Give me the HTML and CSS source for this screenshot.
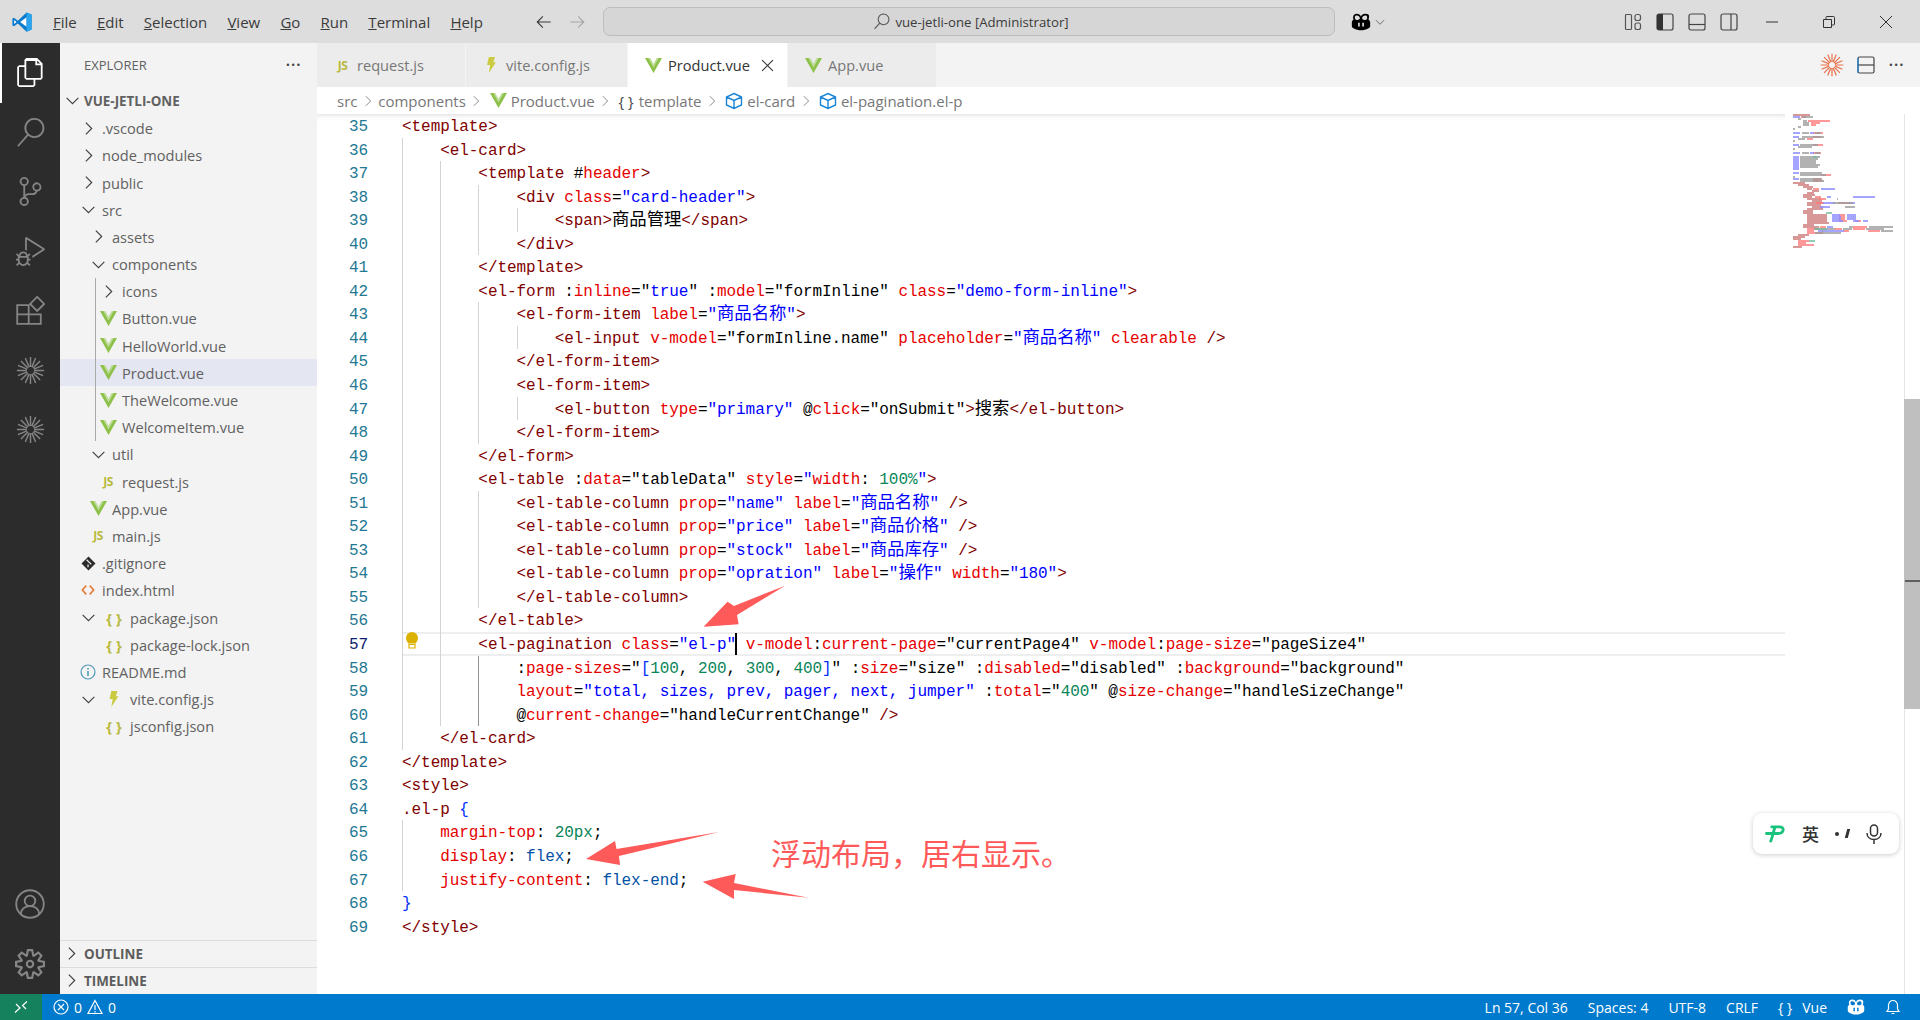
FILE: index.html
```html
<!DOCTYPE html>
<html lang="en">
<head>
    <meta charset="UTF-8">
    <title>Product.vue - vue-jetli-one</title>
    <link rel="stylesheet" href="styles.css">
</head>
<body>
    <svg class="sprites" width="0" height="0">
        <symbol id="i-chev-r" viewBox="0 0 16 16"><path d="M5.500 2.500 11 8l-5.500 5.500" fill="none" stroke="currentColor" stroke-width="1.100"/></symbol>
        <symbol id="i-chev-d" viewBox="0 0 16 16"><path d="M2.500 5.500 8 11l5.500-5.500" fill="none" stroke="currentColor" stroke-width="1.100"/></symbol>
        <symbol id="i-vue" viewBox="0 0 18 18"><path d="M0 1h5.500L9 7.500 12.500 1H18L9 17z" fill="#8dc149"/><path d="M3.500 1 9 11l5.500-10h-2L9 7.500 5.500 1z" fill="#fff" fill-opacity=".45"/></symbol>
        <symbol id="i-bolt" viewBox="0 0 12 18"><path d="M3 0h7L8 6h3L3 18l1.500-9H1z" fill="#cbcb41"/></symbol>
        <symbol id="i-box" viewBox="0 0 18 18"><path d="M9 1.500 16.500 5v8L9 16.500 1.500 13V5zM1.500 5 9 8.500 16.500 5M9 8.500v8" fill="none" stroke="#1a85d6" stroke-width="1.400"/></symbol>
        <symbol id="i-star" viewBox="0 0 32 32"><path d="M20 16h11M19.700 17.500l10.200 4.200M18.800 18.800l7.800 7.800M17.500 19.700l4.200 10.200M16 20v11M14.500 19.700l-4.200 10.200M13.200 18.800l-7.800 7.800M12.300 17.500 2.100 21.700M12 16H1M12.300 14.500 2.100 10.300M13.200 13.200 5.400 5.400M14.500 12.300 10.300 2.100M16 12V1M17.500 12.300l4.200-10.200M18.800 13.200l7.800-7.800M19.700 14.500l10.200-4.200" fill="none" stroke="currentColor" stroke-width="1.600"/></symbol>
        <symbol id="i-copilot" viewBox="0 0 24 24"><path fill-rule="evenodd" d="M12 5.500C11 3 9.500 2 7 2 4 2 2.500 3.800 2.500 6.500c0 1 .2 2 .6 2.600C2 10 1 11 1 12.500V17c0 1 1 2 2 2.500 3 1.700 6 2.500 9 2.500s6-.8 9-2.500c1-.5 2-1.500 2-2.500v-4.500c0-1.500-1-2.500-2.100-3.400.4-.6.6-1.600.6-2.600C22.500 3.800 21 2 17 2c-2.500 0-4 1-5 3.500zM7 4.300c-1.700 0-2.400.8-2.400 2.200S5.400 9.600 7 9.600s3.700-.6 3.700-2.100S8.700 4.300 7 4.300zm10 0c1.700 0 2.400.8 2.400 2.200s-.8 3.100-2.400 3.100-3.700-.6-3.700-2.100 1.900-3.200 3.700-3.200zM8.500 13v4.500h2V13zm5 0v4.500h2V13z"/></symbol>
    </svg>

    <header class="titlebar">
        <svg class="vs-logo" viewBox="0 0 24 24" width="22" height="22"><path d="M17 1.500 7.500 10.500 3.300 7.300 1.500 8.300v7.400l1.800 1 4.200-3.200L17 22.500l5.500-2.300V3.800z" fill="#0a7bcc"/><path d="M17 6.800 10 12l7 5.200z" fill="#fff"/><path d="M17 1.500l5.500 2.300v16.400L17 22.500z" fill="#2ba4ee"/><path d="M3.500 9.700 6 12l-2.500 2.300z" fill="#fff"/></svg>
        <nav class="menu">
            <span><u>F</u>ile</span>
            <span><u>E</u>dit</span>
            <span><u>S</u>election</span>
            <span><u>V</u>iew</span>
            <span><u>G</u>o</span>
            <span><u>R</u>un</span>
            <span><u>T</u>erminal</span>
            <span><u>H</u>elp</span>
        </nav>
        <div class="nav-arrows">
            <svg viewBox="0 0 16 16" width="18" height="18"><path d="M14 8H2.500M7 3 2 8l5 5" fill="none" stroke="#3b3b3b" stroke-width="1"/></svg>
            <svg class="off" viewBox="0 0 16 16" width="18" height="18"><path d="M2 8h11.500M9 3l5 5-5 5" fill="none" stroke="#a6a6a6" stroke-width="1"/></svg>
        </div>
        <div class="command-center">
            <svg viewBox="0 0 16 16" width="17" height="17"><path d="M10 1a5 5 0 1 1-3.600 8.500L1.500 15M10 1a5 5 0 0 0-3.600 8.500" fill="none" stroke="#555" stroke-width="1"/></svg>
            <span>vue-jetli-one [Administrator]</span>
        </div>
        <div class="copilot-menu">
            <svg width="20" height="20"><use href="#i-copilot"/></svg>
            <svg class="tiny-chev" width="12" height="12"><use href="#i-chev-d"/></svg>
        </div>
        <div class="layout-btns">
            <svg viewBox="0 0 18 18" width="18" height="18"><g fill="none" stroke="#555" stroke-width="1.200"><rect x="1.500" y="1.500" width="6" height="15" rx="1"/><rect x="11" y="1.500" width="5.500" height="6" rx="2"/><rect x="11" y="10" width="5.500" height="6.500" rx="2"/></g></svg>
            <svg viewBox="0 0 18 18" width="18" height="18"><rect x="1" y="1" width="16" height="16" rx="2" fill="none" stroke="#444" stroke-width="1.200"/><path d="M1 3a2 2 0 0 1 2-2h4v16H3a2 2 0 0 1-2-2z" fill="#333"/></svg>
            <svg viewBox="0 0 18 18" width="18" height="18"><rect x="1" y="1" width="16" height="16" rx="2" fill="none" stroke="#444" stroke-width="1.200"/><path d="M1 11.500h16" stroke="#444" stroke-width="1.200"/></svg>
            <svg viewBox="0 0 18 18" width="18" height="18"><rect x="1" y="1" width="16" height="16" rx="2" fill="none" stroke="#444" stroke-width="1.200"/><path d="M11 1v16" stroke="#444" stroke-width="1.200"/></svg>
        </div>
        <div class="window-btns">
            <svg viewBox="0 0 12 12" width="12" height="12"><path d="M0 6h12" stroke="#333" stroke-width="1"/></svg>
            <svg viewBox="0 0 12 12" width="12" height="12"><path d="M.5 3.500h8v8h-8zM3 3.500V1.500A1 1 0 0 1 4 .5h6.500a1 1 0 0 1 1 1V8a1 1 0 0 1-1 1h-2" fill="none" stroke="#333" stroke-width="1"/></svg>
            <svg viewBox="0 0 12 12" width="12" height="12"><path d="M0 0l12 12M12 0 0 12" stroke="#333" stroke-width="1"/></svg>
        </div>
    </header>

    <main class="workbench">
        <aside class="activitybar">
            <div class="act active"><svg viewBox="0 0 24 24" width="29" height="29"><path fill="#fff" d="M17.500 0h-9L7 1.500V6H2.500L1 7.500v15.070L2.500 24h12.070L16 22.570V18h4.700l1.300-1.430V4.500L17.500 0zm0 2.120l2.380 2.380H17.500V2.120zm-3 20.380h-12v-15H7v9.070L8.500 18h6v4.500zm6-6h-12v-14H16V6h4.500v10.500z"/></svg></div>
            <div class="act"><svg viewBox="0 0 24 24" width="29" height="29"><path d="M15.250 0a8.250 8.250 0 0 0-6.180 13.720L1 22.880l1.120 1 8.050-9.120A8.251 8.251 0 1 0 15.250.01V0zm0 15a6.750 6.750 0 1 1 0-13.500 6.750 6.750 0 0 1 0 13.500z"/></svg></div>
            <div class="act"><svg viewBox="0 0 24 24" width="29" height="29"><path d="M21.007 8.222A3.738 3.738 0 0 0 15.045 5.200a3.737 3.737 0 0 0 1.156 6.583 2.988 2.988 0 0 1-2.668 1.670h-2.990a4.456 4.456 0 0 0-2.989 1.165V7.400a3.737 3.737 0 1 0-1.494 0v9.117a3.776 3.776 0 1 0 1.816.099 2.990 2.990 0 0 1 2.668-1.667h2.990a4.484 4.484 0 0 0 4.223-3.039 3.736 3.736 0 0 0 3.250-3.687zM4.565 3.738a2.242 2.242 0 1 1 4.484 0 2.242 2.242 0 0 1-4.484 0zm4.484 16.441a2.242 2.242 0 1 1-4.484 0 2.242 2.242 0 0 1 4.484 0zm8.221-9.715a2.242 2.242 0 1 1 0-4.485 2.242 2.242 0 0 1 0 4.485z"/></svg></div>
            <div class="act"><svg viewBox="0 0 24 24" width="29" height="29"><path d="M10.940 13.500l-1.320 1.320a3.730 3.730 0 0 0-7.240 0L1.060 13.500 0 14.560l1.720 1.720-.22.220V18H0v1.500h1.500v.08c.077.489.214.966.41 1.420L0 22.940 1.060 24l1.650-1.650A4.308 4.308 0 0 0 6 24a4.310 4.310 0 0 0 3.290-1.650L10.940 24 12 22.940 10.090 21c.198-.464.336-.951.41-1.450v-.1H12V18h-1.500v-1.500l-.22-.22L12 14.560l-1.060-1.060zM6 13.500a2.250 2.250 0 0 1 2.250 2.250h-4.500A2.250 2.250 0 0 1 6 13.500zm3 6a3.330 3.330 0 0 1-3 3 3.330 3.330 0 0 1-3-3v-2.250h6v2.250zm14.760-9.900v1.260L13.500 17.370v-1.800l8.460-5.370L9 2v9.460a5.070 5.070 0 0 0-1.500-.72V.63L8.640 0l15.120 9.600z"/></svg></div>
            <div class="act"><svg viewBox="0 0 24 24" width="29" height="29"><path d="M1 7.500h9.500V23H1zM1 15.200h19.500V23h-10M10.500 7.500v15.500M17.500.8l5.800 5.800-5.800 5.800-5.800-5.800z" fill="none" stroke="#858585" stroke-width="1.500"/></svg></div>
            <div class="act"><svg width="29" height="29"><use href="#i-star"/></svg></div>
            <div class="act"><svg width="29" height="29"><use href="#i-star"/></svg></div>
            <div class="act-spacer"></div>
            <div class="act"><svg viewBox="0 0 24 24" width="30" height="30"><g fill="none" stroke="#858585" stroke-width="1.500"><circle cx="12" cy="12" r="11"/><circle cx="12" cy="9.500" r="4.200"/><path d="M4.500 20c.6-4 3.500-6.300 7.500-6.300s6.900 2.300 7.500 6.300"/></g></svg></div>
            <div class="act act-last"><svg viewBox="0 0 24 24" width="30" height="30"><path d="M19.850 8.750l4.150.83v4.840l-4.150.83 2.350 3.520-3.430 3.430-3.520-2.350-.83 4.150H9.580l-.83-4.150-3.520 2.350-3.430-3.430 2.350-3.520L0 14.420V9.580l4.150-.83L1.800 5.230 5.230 1.800l3.520 2.350L9.580 0h4.840l.83 4.150 3.520-2.350 3.430 3.430-2.350 3.520zm-1.570 5.070l4-.81v-2l-4-.81-.54-1.300 2.290-3.430-1.430-1.430-3.430 2.290-1.300-.54-.81-4h-2l-.81 4-1.300.54-3.430-2.290-1.430 1.430L6.380 8.900l-.54 1.300-4 .81v2l4 .81.54 1.300-2.290 3.430 1.430 1.430 3.430-2.290 1.300.54.81 4h2l.81-4 1.300-.54 3.430 2.290 1.430-1.430-2.290-3.430.54-1.300zm-8.186-4.672A3.430 3.430 0 0 1 12 8.570 3.440 3.440 0 0 1 15.430 12a3.430 3.430 0 1 1-5.336-2.852zm.956 4.274c.281.188.612.288.95.288A1.700 1.700 0 0 0 13.710 12a1.710 1.710 0 1 0-2.660 1.422z"/></svg></div>
        </aside>

        <aside class="sidebar">
            <div class="side-head"><span>EXPLORER</span><span class="dots">···</span></div>
            <div class="tree">
                <div class="row root"><span class="slot"><svg width="17" height="17"><use href="#i-chev-d"/></svg></span>VUE-JETLI-ONE</div>
                <div class="row d1"><span class="slot"><svg width="17" height="17"><use href="#i-chev-r"/></svg></span>.vscode</div>
                <div class="row d1"><span class="slot"><svg width="17" height="17"><use href="#i-chev-r"/></svg></span>node_modules</div>
                <div class="row d1"><span class="slot"><svg width="17" height="17"><use href="#i-chev-r"/></svg></span>public</div>
                <div class="row d1"><span class="slot"><svg width="17" height="17"><use href="#i-chev-d"/></svg></span>src</div>
                <div class="row d2"><span class="slot"><svg width="17" height="17"><use href="#i-chev-r"/></svg></span>assets</div>
                <div class="row d2"><span class="slot"><svg width="17" height="17"><use href="#i-chev-d"/></svg></span>components</div>
                <div class="guided">
                    <div class="row d3"><span class="slot"><svg width="17" height="17"><use href="#i-chev-r"/></svg></span>icons</div>
                    <div class="row d3"><span class="slot"><svg width="17" height="17"><use href="#i-vue"/></svg></span>Button.vue</div>
                    <div class="row d3"><span class="slot"><svg width="17" height="17"><use href="#i-vue"/></svg></span>HelloWorld.vue</div>
                    <div class="row d3 selected"><span class="slot"><svg width="17" height="17"><use href="#i-vue"/></svg></span>Product.vue</div>
                    <div class="row d3"><span class="slot"><svg width="17" height="17"><use href="#i-vue"/></svg></span>TheWelcome.vue</div>
                    <div class="row d3"><span class="slot"><svg width="17" height="17"><use href="#i-vue"/></svg></span>WelcomeItem.vue</div>
                </div>
                <div class="row d2"><span class="slot"><svg width="17" height="17"><use href="#i-chev-d"/></svg></span>util</div>
                <div class="row d3"><span class="slot js">JS</span>request.js</div>
                <div class="row d2"><span class="slot"><svg width="17" height="17"><use href="#i-vue"/></svg></span>App.vue</div>
                <div class="row d2"><span class="slot js">JS</span>main.js</div>
                <div class="row d1"><span class="slot"><svg viewBox="0 0 16 16" width="15" height="15"><path d="M8 .5 15.500 8 8 15.500.5 8z" fill="#2b2b2b"/><path d="M6 4l5 5M7.500 9v3" stroke="#f3f3f3" stroke-width="1.300"/></svg></span>.gitignore</div>
                <div class="row d1"><span class="slot"><svg viewBox="0 0 16 16" width="14" height="14"><path d="M6 3 1.500 8 6 13M10 3l4.500 5L10 13" fill="none" stroke="#e37933" stroke-width="1.800"/></svg></span>index.html</div>
                <div class="row d1"><span class="slot"><svg width="17" height="17"><use href="#i-chev-d"/></svg></span><span class="nest json">{ }</span>package.json</div>
                <div class="row d1"><span class="slot"></span><span class="nest json">{ }</span>package-lock.json</div>
                <div class="row d1"><span class="slot"><svg viewBox="0 0 16 16" width="16" height="16"><circle cx="8" cy="8" r="7" fill="none" stroke="#519aba" stroke-width="1.200"/><path d="M8 4v1.600M8 7v5" stroke="#519aba" stroke-width="1.600"/></svg></span>README.md</div>
                <div class="row d1"><span class="slot"><svg width="17" height="17"><use href="#i-chev-d"/></svg></span><span class="nest"><svg width="12" height="16"><use href="#i-bolt"/></svg></span>vite.config.js</div>
                <div class="row d1"><span class="slot"></span><span class="nest json">{ }</span>jsconfig.json</div>
            </div>
            <div class="panel-head"><svg width="17" height="17"><use href="#i-chev-r"/></svg>OUTLINE</div>
            <div class="panel-head"><svg width="17" height="17"><use href="#i-chev-r"/></svg>TIMELINE</div>
        </aside>

        <section class="editor">
            <div class="tabs">
                <div class="tab"><span class="tab-icon js">JS</span>request.js</div>
                <div class="tab tab-vite"><span class="tab-icon"><svg width="11" height="16"><use href="#i-bolt"/></svg></span>vite.config.js</div>
                <div class="tab tab-active"><span class="tab-icon"><svg width="17" height="17"><use href="#i-vue"/></svg></span>Product.vue<svg class="tab-close" viewBox="0 0 12 12" width="13" height="13"><path d="M1 1l10 10M11 1 1 11" stroke="#333" stroke-width="1"/></svg></div>
                <div class="tab"><span class="tab-icon"><svg width="17" height="17"><use href="#i-vue"/></svg></span>App.vue</div>
                <div class="tab-actions">
                    <svg class="orange" width="24" height="24"><use href="#i-star"/></svg>
                    <svg viewBox="0 0 18 18" width="18" height="20"><rect x="1" y="1" width="16" height="16" rx="1.500" fill="none" stroke="#444" stroke-width="1.200"/><path d="M1 9h16" stroke="#444" stroke-width="1.200"/><path d="M1 2v15" stroke="#1a85d6" stroke-width="1.200"/></svg>
                    <span class="dots">···</span>
                </div>
            </div>
            <div class="breadcrumbs">
                <span>src</span><svg class="sep" width="14" height="14"><use href="#i-chev-r"/></svg>
                <span>components</span><svg class="sep" width="14" height="14"><use href="#i-chev-r"/></svg>
                <svg class="crumb-icon" width="17" height="17"><use href="#i-vue"/></svg><span>Product.vue</span><svg class="sep" width="14" height="14"><use href="#i-chev-r"/></svg>
                <span class="crumb-braces">{ }</span><span>template</span><svg class="sep" width="14" height="14"><use href="#i-chev-r"/></svg>
                <svg class="crumb-icon" width="18" height="18"><use href="#i-box"/></svg><span>el-card</span><svg class="sep" width="14" height="14"><use href="#i-chev-r"/></svg>
                <svg class="crumb-icon" width="18" height="18"><use href="#i-box"/></svg><span>el-pagination.el-p</span>
            </div>
            <div class="editor-body">
                <div class="lines">
                    <div class="gutter">
                        <div>35</div><div>36</div><div>37</div><div>38</div><div>39</div><div>40</div><div>41</div><div>42</div><div>43</div><div>44</div><div>45</div><div>46</div><div>47</div><div>48</div><div>49</div><div>50</div><div>51</div><div>52</div><div>53</div><div>54</div><div>55</div><div>56</div><div class="now">57</div><div>58</div><div>59</div><div>60</div><div>61</div><div>62</div><div>63</div><div>64</div><div>65</div><div>66</div><div>67</div><div>68</div><div>69</div>
                    </div>
                    <div class="code">
<div class="ln"><span class="t">&lt;template&gt;</span></div>
<div class="ln"><i></i><span class="t">&lt;el-card&gt;</span></div>
<div class="ln"><i></i><i></i><span class="t">&lt;template</span> #<span class="a">header</span><span class="t">&gt;</span></div>
<div class="ln"><i></i><i></i><i></i><span class="t">&lt;div</span> <span class="a">class</span>=<span class="s">"card-header"</span><span class="t">&gt;</span></div>
<div class="ln"><i></i><i></i><i></i><i></i><span class="t">&lt;span&gt;</span><span class="c">商品管理</span><span class="t">&lt;/span&gt;</span></div>
<div class="ln"><i></i><i></i><i></i><span class="t">&lt;/div&gt;</span></div>
<div class="ln"><i></i><i></i><span class="t">&lt;/template&gt;</span></div>
<div class="ln"><i></i><i></i><span class="t">&lt;el-form</span> :<span class="a">inline</span>="<span class="s">true</span>" :<span class="a">model</span>="formInline" <span class="a">class</span>=<span class="s">"demo-form-inline"</span><span class="t">&gt;</span></div>
<div class="ln"><i></i><i></i><i></i><span class="t">&lt;el-form-item</span> <span class="a">label</span>=<span class="s">"<span class="c">商品名称</span>"</span><span class="t">&gt;</span></div>
<div class="ln"><i></i><i></i><i></i><i></i><span class="t">&lt;el-input</span> <span class="a">v-model</span>="formInline.name" <span class="a">placeholder</span>=<span class="s">"<span class="c">商品名称</span>"</span> <span class="a">clearable</span> <span class="t">/&gt;</span></div>
<div class="ln"><i></i><i></i><i></i><span class="t">&lt;/el-form-item&gt;</span></div>
<div class="ln"><i></i><i></i><i></i><span class="t">&lt;el-form-item&gt;</span></div>
<div class="ln"><i></i><i></i><i></i><i></i><span class="t">&lt;el-button</span> <span class="a">type</span>=<span class="s">"primary"</span> @<span class="a">click</span>="onSubmit"<span class="t">&gt;</span><span class="c">搜索</span><span class="t">&lt;/el-button&gt;</span></div>
<div class="ln"><i></i><i></i><i></i><span class="t">&lt;/el-form-item&gt;</span></div>
<div class="ln"><i></i><i></i><span class="t">&lt;/el-form&gt;</span></div>
<div class="ln"><i></i><i></i><span class="t">&lt;el-table</span> :<span class="a">data</span>="tableData" <span class="a">style</span>=<span class="s">"</span><span class="a">width</span>: <span class="n">100%</span><span class="s">"</span><span class="t">&gt;</span></div>
<div class="ln"><i></i><i></i><i></i><span class="t">&lt;el-table-column</span> <span class="a">prop</span>=<span class="s">"name"</span> <span class="a">label</span>=<span class="s">"<span class="c">商品名称</span>"</span> <span class="t">/&gt;</span></div>
<div class="ln"><i></i><i></i><i></i><span class="t">&lt;el-table-column</span> <span class="a">prop</span>=<span class="s">"price"</span> <span class="a">label</span>=<span class="s">"<span class="c">商品价格</span>"</span> <span class="t">/&gt;</span></div>
<div class="ln"><i></i><i></i><i></i><span class="t">&lt;el-table-column</span> <span class="a">prop</span>=<span class="s">"stock"</span> <span class="a">label</span>=<span class="s">"<span class="c">商品库存</span>"</span> <span class="t">/&gt;</span></div>
<div class="ln"><i></i><i></i><i></i><span class="t">&lt;el-table-column</span> <span class="a">prop</span>=<span class="s">"opration"</span> <span class="a">label</span>=<span class="s">"<span class="c">操作</span>"</span> <span class="a">width</span>=<span class="s">"180"</span><span class="t">&gt;</span></div>
<div class="ln"><i></i><i></i><i></i><span class="t">&lt;/el-table-column&gt;</span></div>
<div class="ln"><i></i><i></i><span class="t">&lt;/el-table&gt;</span></div>
<div class="ln current"><svg class="bulb" viewBox="0 0 12 17" width="12" height="17"><path d="M6 0a6 6 0 0 1 6 6c0 2.500-1.500 3.500-2.200 5.500H2.200C1.500 9.500 0 8.500 0 6a6 6 0 0 1 6-6z" fill="#ddb100"/><path d="M3 12.500h6V16H3z" fill="#fff" stroke="#ddb100" stroke-width="1.200"/></svg><i></i><i></i><span class="t">&lt;el-pagination</span> <span class="a">class</span>=<span class="s">"el-p"</span><b class="cursor"></b> <span class="a">v-model</span>:<span class="a">current-page</span>="currentPage4" <span class="a">v-model</span>:<span class="a">page-size</span>="pageSize4"</div>
<div class="ln"><i></i><i></i><i class="on"></i>:<span class="a">page-sizes</span>="<span class="b">[</span><span class="n">100</span>, <span class="n">200</span>, <span class="n">300</span>, <span class="n">400</span><span class="b">]</span>" :<span class="a">size</span>="size" :<span class="a">disabled</span>="disabled" :<span class="a">background</span>="background"</div>
<div class="ln"><i></i><i></i><i class="on"></i><span class="a">layout</span>=<span class="s">"total, sizes, prev, pager, next, jumper"</span> :<span class="a">total</span>="<span class="n">400</span>" @<span class="a">size-change</span>="handleSizeChange"</div>
<div class="ln"><i></i><i></i><i class="on"></i>@<span class="a">current-change</span>="handleCurrentChange" <span class="t">/&gt;</span></div>
<div class="ln"><i></i><span class="t">&lt;/el-card&gt;</span></div>
<div class="ln"><span class="t">&lt;/template&gt;</span></div>
<div class="ln"><span class="t">&lt;style&gt;</span></div>
<div class="ln"><span class="t">.el-p</span> <span class="b">{</span></div>
<div class="ln"><i></i><span class="a">margin-top</span>: <span class="n">20px</span>;</div>
<div class="ln"><i></i><span class="a">display</span>: <span class="v">flex</span>;</div>
<div class="ln"><i></i><span class="a">justify-content</span>: <span class="v">flex-end</span>;</div>
<div class="ln"><span class="b">}</span></div>
<div class="ln"><span class="t">&lt;/style&gt;</span></div>
                    </div>
                </div>
                <div class="minimap">
                    <svg width="105" height="142" viewBox="0 0 105 142" fill="none" stroke-width="1.600">
                        <path stroke="#c77" d="M0 1h17M0 69h12M5 71h11M10 73h10M14 75h5M19 77h7M14 79h7M10 81h12M10 83h9M14 85h14M19 87h10M14 89h16M14 91h14M19 93h11M14 95h16M10 97h10M10 99h10M14 101h20M14 103h20M14 105h20M14 107h20M14 109h22M10 111h11M10 113h16M5 121h11M0 123h12M0 125h8M0 133h9"/>
                        <path stroke="#f77" d="M8 3h5M15 7h22M18 9h9M18 11h5M20 19h10M20 23h8M14 25h6M20 31h10M20 39h8M28 61h10M20 65h8M20 67h10M20 75h6M22 83h6M26 85h7M23 89h8M45 89h12M46 101h6M46 103h6M46 105h6M46 107h8M62 107h6M27 113h6M60 113h14M14 115h12M42 115h7M60 115h12M14 117h7M50 117h6M75 117h12M14 119h16M5 127h11M5 129h8M5 131h16"/>
                        <path stroke="#88f" d="M0 3h7M0 19h7M17 19h4M0 23h6M0 31h6M0 39h7M17 39h4M0 43h6M0 45h6M0 47h6M0 49h6M0 51h6M0 53h6M0 55h6M0 59h6M0 65h6M28 75h14M34 83h4M60 83h22M30 89h12M56 89h6M27 93h10M39 101h8M54 101h9M39 103h9M54 103h9M39 105h9M54 105h9M39 107h11M60 107h6M70 107h5M34 113h6M25 117h26"/>
                        <path stroke="#999" d="M9 3h11M5 5h3M10 7h4M10 9h6M10 11h6M5 13h3M0 15h2M9 19h7M22 19h6M9 23h22M5 25h7M0 27h2M7 31h18M5 33h14M0 35h2M9 39h7M22 39h5M7 43h20M7 45h18M7 47h16M7 49h16M7 51h20M7 53h18M7 59h22M7 61h26M0 63h2M7 65h22M7 67h24M44 85h1M40 89h20M52 93h10M56 113h4M76 113h24M21 115h21M50 115h9M73 115h18M29 117h1M88 117h12M22 119h26"/>
                        <path stroke="#7b9" d="M22 115h12M20 43h4M16 127h6M33 99h6"/>
                    </svg>
                </div>
                <div class="scroll-track"><div class="scroll-thumb"><div class="scroll-mark"></div></div></div>
            </div>
        </section>
    </main>

    <footer class="statusbar">
        <div class="remote"><svg viewBox="0 0 16 16" width="16" height="16"><path d="M2 13.500 7 9 3 5M14 2.500 9.500 6.500 13 10" fill="none" stroke="#fff" stroke-width="1.200"/></svg></div>
        <div class="problems">
            <svg viewBox="0 0 16 16" width="16" height="16"><circle cx="8" cy="8" r="7" fill="none" stroke="#fff" stroke-width="1.200"/><path d="M5 5l6 6M11 5l-6 6" stroke="#fff" stroke-width="1.200"/></svg><span>0</span>
            <svg class="warn" viewBox="0 0 16 16" width="16" height="16"><path d="M8 1.500 15 14.500H1zM8 6v5M8 12v1.500" fill="none" stroke="#fff" stroke-width="1.200"/></svg><span>0</span>
        </div>
        <div class="status-right">
            <span>Ln 57, Col 36</span>
            <span>Spaces: 4</span>
            <span>UTF-8</span>
            <span>CRLF</span>
            <span class="lang"><span>{ }</span><span>Vue</span></span>
            <svg class="status-copilot" width="18" height="18"><use href="#i-copilot"/></svg>
            <svg viewBox="0 0 16 16" width="16" height="16"><path d="M8 1.500a4.500 4.500 0 0 1 4.500 4.500v4l1.500 2.500H2L3.500 10V6A4.500 4.500 0 0 1 8 1.500zM6.500 14.500h3" fill="none" stroke="#fff" stroke-width="1.200"/></svg>
        </div>
    </footer>

    <!-- screenshot annotations on top of the editor -->
    <svg class="arrows" width="1920" height="1020" viewBox="0 0 1920 1020">
        <path d="M703.600 626.700 727.500 601.700 734 606 785 585.700 737 615 738.600 624.300z"/>
        <path d="M586 859 615 841 616.500 849 719 832 619 856 620 865z"/>
        <path d="M702.700 881.700 735.700 874 734 883 808.500 897.700 734 890 734 899z"/>
    </svg>
    <div class="note">浮动布局，居右显示。</div>

    <div class="ime">
        <svg viewBox="0 0 22 20" width="21" height="19"><path d="M6 18c1.500-4 3-10 4.500-15M7 3h8c3 0 4.500 1.500 4 3.500-.5 2.500-3 3.500-6 3.500H1.500" fill="none" stroke="#19c37d" stroke-width="3" stroke-linecap="round"/></svg>
        <span class="ime-lang">英</span>
        <span class="ime-punct"><b></b><em></em></span>
        <svg viewBox="0 0 18 20" width="18" height="20"><rect x="5.500" y="1" width="7" height="11" rx="3.500" fill="none" stroke="#333" stroke-width="1.500"/><path d="M2 9c0 4 3 6.500 7 6.500s7-2.500 7-6.500M9 15.500V20" fill="none" stroke="#333" stroke-width="1.500"/></svg>
    </div>
</body>
</html>
```

FILE: styles.css
```css
* {
    box-sizing: border-box;
}

body {
    margin: 0;
    width: 1920px;
    height: 1020px;
    overflow: hidden;
    position: relative;
    display: flex;
    flex-direction: column;
    font-family: "Open Sans", "Noto Sans", sans-serif;
    font-size: 14.6px;
    color: #616161;
    background-color: #fff;
}

.sprites {
    position: absolute;
}

/* title bar */
.titlebar {
    height: 43px;
    flex-shrink: 0;
    display: flex;
    align-items: center;
    background-color: #dddddd;
    color: #3b3b3b;
}

.vs-logo {
    margin-left: 11px;
}

.menu {
    display: flex;
    margin-left: 10px;
    width: 492px;
    gap: 20.200px;
    padding-left: 10px;
    font-size: 15px;
}

.nav-arrows {
    display: flex;
    gap: 15px;
}

.command-center {
    margin-left: 17px;
    width: 732px;
    height: 29px;
    display: flex;
    align-items: center;
    justify-content: center;
    gap: 5px;
    background-color: #d6d6d6;
    border: 1px solid #bdbdbd;
    border-radius: 7px;
    font-size: 13.200px;
    padding-left: 4px;
}

.copilot-menu {
    margin-left: 16px;
    display: flex;
    align-items: center;
    gap: 3px;
    color: #222;
}

.tiny-chev {
    color: #555;
}

.layout-btns {
    margin-left: 238px;
    display: flex;
    gap: 14px;
}

.window-btns {
    margin-left: 28px;
    display: flex;
    gap: 45px;
}

/* main area */
.workbench {
    flex: 1;
    display: flex;
    min-height: 0;
}

.activitybar {
    width: 60px;
    flex-shrink: 0;
    display: flex;
    flex-direction: column;
    background-color: #2c2c2c;
    color: #858585;
}

.act {
    height: 59.500px;
    flex-shrink: 0;
    display: flex;
    align-items: center;
    justify-content: center;
    fill: #858585;
}

.act.active {
    border-left: 2px solid #fff;
    padding-right: 2px;
}

.act-spacer {
    flex: 1;
}

.act-last {
    height: 60px;
}

.sidebar {
    width: 257px;
    flex-shrink: 0;
    display: flex;
    flex-direction: column;
    background-color: #f3f3f3;
}

.side-head {
    height: 44.400px;
    flex-shrink: 0;
    display: flex;
    align-items: center;
    justify-content: space-between;
    padding: 0 16px 0 24px;
    font-size: 13px;
}

.dots {
    font-size: 20px;
    font-weight: 400;
    line-height: 1;
    color: #424242;
}

.tree {
    flex: 1;
}

.row {
    height: 27.200px;
    display: flex;
    align-items: center;
    white-space: nowrap;
    color: #616161;
}

.root {
    padding-left: 5px;
    font-weight: 700;
    font-size: 13.400px;
}

.root .slot {
    margin-right: 5px;
}

.d1 {
    padding-left: 21px;
}

.d2 {
    padding-left: 31px;
}

.d3 {
    padding-left: 41px;
}

.slot {
    width: 14px;
    flex-shrink: 0;
    margin-right: 7px;
    display: flex;
    justify-content: center;
    color: #424242;
}

.slot svg {
    flex-shrink: 0;
}

.js {
    font-size: 12px;
    font-weight: 700;
    color: #b9b93d;
    letter-spacing: -0.500px;
}

.nest {
    width: 14px;
    margin: 0 9px 0 5px;
    display: flex;
    justify-content: center;
    flex-shrink: 0;
}

.json {
    color: #b9b93d;
    font-weight: 700;
    white-space: nowrap;
}

.selected {
    background-color: #e4e6f1;
}

.guided {
    position: relative;
}

.guided::before {
    content: "";
    position: absolute;
    left: 35px;
    top: 0;
    bottom: 0;
    width: 1px;
    background-color: #a9a9a9;
}

.panel-head {
    height: 27.200px;
    flex-shrink: 0;
    display: flex;
    align-items: center;
    gap: 4px;
    padding-left: 3px;
    border-top: 1.500px solid #dcdcdc;
    font-size: 13.400px;
    font-weight: 700;
    color: #5c5c5c;
}

.panel-head svg {
    color: #424242;
}

/* editor */
.editor {
    flex: 1;
    min-width: 0;
    display: flex;
    flex-direction: column;
}

.tabs {
    height: 44px;
    flex-shrink: 0;
    display: flex;
    background-color: #f3f3f3;
}

.tab {
    width: 149px;
    flex-shrink: 0;
    display: flex;
    align-items: center;
    padding-left: 17px;
    background-color: #ececec;
    border-right: 1px solid #f3f3f3;
    color: #777;
}

.tab-vite {
    width: 162px;
}

.tab-active {
    width: 160px;
    background-color: #fff;
    color: #333;
}

.tab-icon {
    width: 17px;
    margin-right: 6px;
    display: flex;
    justify-content: center;
    flex-shrink: 0;
}

.tab-close {
    margin-left: 11px;
}

.tab-actions {
    margin-left: auto;
    display: flex;
    align-items: center;
    gap: 13px;
    padding-right: 16px;
}

.orange {
    color: #e8714a;
}

.breadcrumbs {
    height: 27px;
    flex-shrink: 0;
    display: flex;
    align-items: center;
    padding-left: 20px;
    font-size: 15px;
    color: #777;
}

.sep {
    margin: 0 3.400px;
    color: #888;
}

.crumb-icon {
    margin: 0 4px 0 3px;
}

.crumb-braces {
    color: #444;
    margin: 0 5px 0 3px;
    white-space: nowrap;
}

.editor-body {
    flex: 1;
    min-height: 0;
    display: flex;
}

.lines {
    flex: 1;
    min-width: 0;
    display: flex;
    box-shadow: inset 0 6px 6px -6px #cfcfcf;
    font-family: "Liberation Mono", monospace;
    font-size: 16px;
    letter-spacing: -0.056px;
    color: #000;
}

.gutter {
    width: 51px;
    margin-right: 34px;
    padding-top: 2px;
    flex-shrink: 0;
    text-align: right;
    color: #237893;
    line-height: 23.550px;
}

.gutter .now {
    color: #0b216f;
}

.code {
    flex: 1;
    min-width: 0;
}

.ln {
    height: 23.550px;
    padding-top: 2px;
    line-height: 23.550px;
    white-space: pre;
    position: relative;
}

.ln i {
    display: inline-block;
    width: 38.180px;
    height: 23.550px;
    margin-top: -2px;
    vertical-align: top;
    border-left: 1px solid #d3d3d3;
}

.ln i.on {
    border-left-color: #939393;
}

.current {
    box-shadow: inset 0 2px 0 #eeeeee, inset 0 -2px 0 #eeeeee;
}

.bulb {
    position: absolute;
    left: 4px;
    top: 0;
}

.cursor {
    display: inline-block;
    width: 2px;
    height: 22px;
    margin: -1px -1px 0;
    vertical-align: top;
    background-color: #000;
}

.t { color: #800000; }
.a { color: #e50000; }
.s { color: #0000ff; }
.b { color: #0431fa; }
.n { color: #098658; }
.v { color: #0451a5; }

.c {
    font-family: "Noto Sans CJK SC", sans-serif;
    font-size: 17.400px;
    line-height: 0;
}

.minimap {
    width: 119px;
    flex-shrink: 0;
    padding-left: 8px;
}

.scroll-track {
    width: 16px;
    flex-shrink: 0;
    position: relative;
    border-left: 1px solid #e5e5e5;
}

.scroll-thumb {
    position: absolute;
    top: 285px;
    left: -1px;
    right: 0;
    height: 310px;
    background-color: #bfbfbf;
}

.scroll-mark {
    position: absolute;
    top: 181px;
    left: 1px;
    right: 0;
    height: 2px;
    background-color: #5f5f5f;
}

/* status bar */
.statusbar {
    height: 26px;
    flex-shrink: 0;
    display: flex;
    align-items: center;
    background-color: #007acc;
    color: #fff;
    font-size: 14px;
}

.remote {
    width: 42px;
    height: 100%;
    display: flex;
    align-items: center;
    justify-content: center;
    background-color: #16825d;
}

.problems {
    display: flex;
    align-items: center;
    margin-left: 11px;
    gap: 5px;
}

.status-right {
    margin-left: auto;
    display: flex;
    align-items: center;
    gap: 20px;
    padding-right: 19px;
}

.lang {
    display: flex;
    gap: 10px;
}

.status-copilot {
    color: #fff;
    fill: #fff;
}

/* things lying over the editor */
.arrows {
    position: absolute;
    left: 0;
    top: 0;
    fill: #ff5a5a;
    pointer-events: none;
}

.note {
    position: absolute;
    left: 771px;
    top: 832px;
    font-family: "Noto Sans CJK SC", sans-serif;
    font-size: 30px;
    line-height: 40px;
    white-space: nowrap;
    color: #ff5a5a;
}

.ime {
    position: absolute;
    left: 1753px;
    top: 813px;
    width: 146px;
    height: 41px;
    display: flex;
    align-items: center;
    gap: 16px;
    padding-left: 12px;
    background-color: #fff;
    border-radius: 9px;
    box-shadow: 0 1px 5px rgba(0, 0, 0, 0.2);
}

.ime-lang {
    font-family: "Noto Sans CJK SC", sans-serif;
    font-size: 17px;
    font-weight: 500;
    color: #333;
}

.ime-punct {
    display: flex;
    align-items: center;
    gap: 7px;
}

.ime-punct b {
    width: 4px;
    height: 4px;
    border-radius: 50%;
    background-color: #333;
}

.ime-punct em {
    width: 3px;
    height: 9px;
    background-color: #333;
    transform: skewX(-15deg);
}
```
